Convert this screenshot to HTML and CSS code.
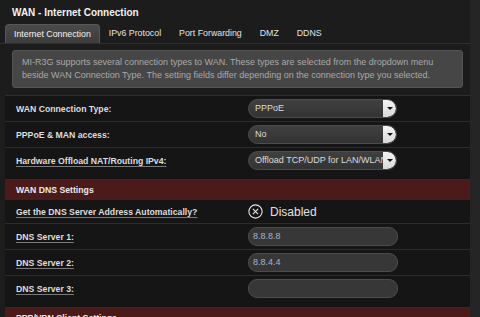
FILE: index.html
```html
<!DOCTYPE html>
<html lang="en">
<head>
    <meta charset="UTF-8">
    <title>WAN - Internet Connection</title>
    <link rel="stylesheet" href="styles.css">
</head>
<body>
    <div class="panel">
        <h1 class="page-title">WAN - Internet Connection</h1>

        <ul class="tabs">
            <li class="tab active">Internet Connection</li>
            <li class="tab">IPv6 Protocol</li>
            <li class="tab">Port Forwarding</li>
            <li class="tab">DMZ</li>
            <li class="tab">DDNS</li>
        </ul>

        <div class="info-box">
            MI-R3G supports several connection types to WAN. These types are selected from the dropdown menu
            beside WAN Connection Type. The setting fields differ depending on the connection type you selected.
        </div>

        <table class="form-table">
            <tr>
                <th>WAN Connection Type:</th>
                <td><div class="select"><span class="select-value">PPPoE</span><span class="select-arrow"></span></div></td>
            </tr>
            <tr>
                <th>PPPoE &amp; MAN access:</th>
                <td><div class="select"><span class="select-value">No</span><span class="select-arrow"></span></div></td>
            </tr>
            <tr class="last">
                <th><span class="hint">Hardware Offload NAT/Routing IPv4:</span></th>
                <td><div class="select"><span class="select-value">Offload TCP/UDP for LAN/WLAN</span><span class="select-arrow"></span></div></td>
            </tr>
            <tr class="section">
                <td colspan="2">WAN DNS Settings</td>
            </tr>
            <tr class="short">
                <th><span class="hint">Get the DNS Server Address Automatically?</span></th>
                <td>
                    <div class="radio">
                        <svg width="15" height="15" viewBox="0 0 15 15">
                            <circle cx="7.5" cy="7.5" r="6.6" fill="none" stroke="#e6e6e6" stroke-width="1.1"/>
                            <path d="M4.9 4.9 L10.1 10.1 M10.1 4.9 L4.9 10.1" stroke="#e6e6e6" stroke-width="1.1"/>
                        </svg>
                        <span>Disabled</span>
                    </div>
                </td>
            </tr>
            <tr>
                <th><span class="hint">DNS Server 1:</span></th>
                <td><div class="input">8.8.8.8</div></td>
            </tr>
            <tr>
                <th><span class="hint">DNS Server 2:</span></th>
                <td><div class="input">8.8.4.4</div></td>
            </tr>
            <tr class="last">
                <th><span class="hint">DNS Server 3:</span></th>
                <td><div class="input"></div></td>
            </tr>
            <tr class="section">
                <td colspan="2">PPP/VPN Client Settings</td>
            </tr>
        </table>
    </div>
</body>
</html>
```

FILE: styles.css
```css
body {
    margin: 0;
    background-color: #252525;
    font-family: 'Liberation Sans', Arial, sans-serif;
    color: #e0e0e0;
    height: 317px;
    overflow: hidden;
}

.panel {
    width: 470px;
    height: 317px;
    background-color: #1c1c1c;
    overflow: hidden;
}

.page-title {
    margin: 0;
    padding: 7px 0 0 12px;
    height: 17px;
    font-size: 10px;
    font-weight: bold;
    color: #f2f2f2;
}

.tabs {
    list-style: none;
    margin: 0;
    padding: 0 0 0 5px;
    display: flex;
    height: 19px;
    border-bottom: 1px solid #2f2f2f;
}

.tab {
    padding: 0 9px;
    font-size: 8.8px;
    line-height: 19px;
    color: #e4e4e4;
}

.tab.active {
    background: linear-gradient(#4a4a4a, #3c3c3c);
    border: 1px solid #575757;
    border-bottom: none;
    border-radius: 4px 4px 0 0;
    padding: 0 8px;
    line-height: 18px;
    color: #f4f4f4;
}

.info-box {
    margin: 6px 7px 0 12px;
    padding: 5px 9px;
    height: 26px;
    background-color: #464646;
    border: 1px solid #535353;
    border-radius: 3px;
    font-size: 9px;
    line-height: 13px;
    color: #a9a9a9;
}

.form-table {
    margin: 7px 0 0 5px;
    width: 465px;
    border-collapse: collapse;
    border-top: 1px solid #2e2e2e;
}

.form-table th,
.form-table td {
    height: 25px;
    padding: 0;
    border-bottom: 1px solid #2c2c2c;
    background-color: #151515;
    vertical-align: middle;
}

.form-table th {
    width: 227px;
    padding-left: 11px;
    text-align: left;
    font-size: 8.7px;
    font-weight: bold;
    color: #dedede;
}

.form-table td {
    padding-left: 5px;
}

.form-table tr.last th,
.form-table tr.last td {
    padding-bottom: 6px;
}

.form-table tr.short th,
.form-table tr.short td {
    height: 23px;
}

.form-table tr.section td {
    height: 20px;
    padding-left: 11px;
    background-color: #4b1b1b;
    border-bottom: none;
    font-size: 8.7px;
    font-weight: bold;
    color: #ececec;
}

.hint {
    text-decoration: underline;
    text-decoration-color: #7a7a7a;
    text-underline-offset: 2px;
}

.select {
    display: flex;
    width: 149px;
    height: 19px;
    box-sizing: border-box;
    border: 1px solid #4c4c4c;
    border-radius: 10px;
    background: linear-gradient(#404040, #333333);
    overflow: hidden;
}

.select-value {
    flex: 1;
    padding-left: 6px;
    font-size: 9px;
    line-height: 17px;
    color: #dcdcdc;
    white-space: nowrap;
    overflow: hidden;
}

.select-arrow {
    position: relative;
    width: 13px;
    background: linear-gradient(#f4f4f4, #d8d8d8);
    border-radius: 0 9px 9px 0;
}

.select-arrow::after {
    content: "";
    position: absolute;
    left: 4px;
    top: 7px;
    border-left: 3px solid transparent;
    border-right: 3px solid transparent;
    border-top: 3px solid #111;
}

.radio {
    display: flex;
    align-items: center;
    gap: 7px;
    font-size: 12px;
    color: #e2e2e2;
}

.radio svg {
    display: block;
}

.input {
    width: 150px;
    height: 19px;
    box-sizing: border-box;
    padding-left: 4px;
    border: 1px solid #4c4c4c;
    border-radius: 9px;
    background-color: #373737;
    font-size: 9px;
    line-height: 17px;
    color: #a9b3c8;
}
```
